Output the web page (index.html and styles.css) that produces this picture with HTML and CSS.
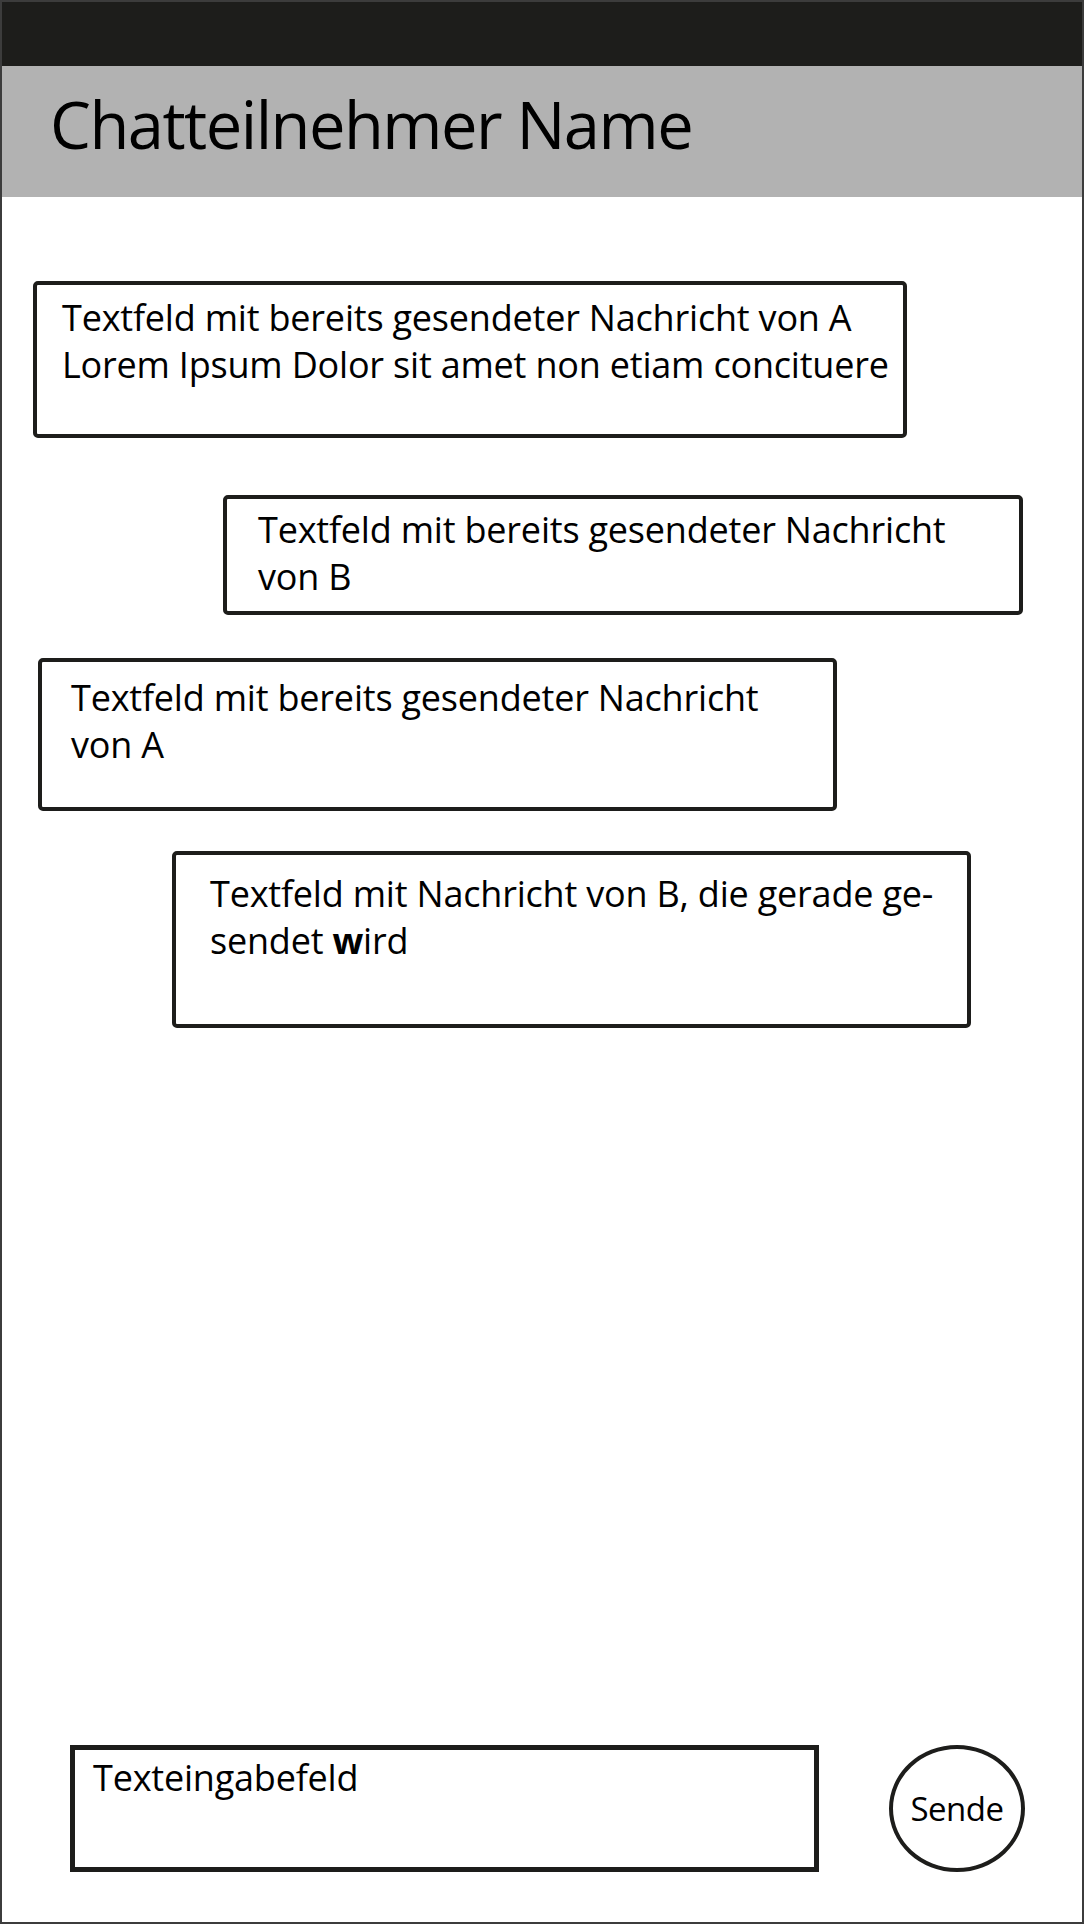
FILE: index.html
```html
<!DOCTYPE html>
<html lang="de">
<head>
  <meta charset="UTF-8">
  <title>Chat Mockup</title>
  <meta name="viewport" content="width=device-width, initial-scale=1">
  <link rel="stylesheet" href="styles.css">
</head>
<body>
  <div class="phone">
    <div class="status-bar"></div>
    <header class="chat-header">
      <h1 class="chat-title">Chatteilnehmer Name</h1>
    </header>

    <main class="chat-area">
      <div class="msg msg-a1">Textfeld mit bereits gesendeter Nachricht von A<br>Lorem Ipsum Dolor sit amet non etiam concituere</div>
      <div class="msg msg-b1">Textfeld mit bereits gesendeter Nachricht<br>von B</div>
      <div class="msg msg-a2">Textfeld mit bereits gesendeter Nachricht<br>von A</div>
      <div class="msg msg-b2">Textfeld mit Nachricht von B, die gerade ge-<br>sendet <b>w</b>ird</div>
    </main>

    <footer class="composer">
      <div class="input-box">Texteingabefeld</div>
      <button class="send-btn">Sende</button>
    </footer>
  </div>
</body>
</html>
```

FILE: styles.css
```css
html, body {
  margin: 0;
  padding: 0;
  background: #fff;
}
body {
  font-family: "Open Sans", "Liberation Sans", sans-serif;
  color: #000;
}
.phone {
  width: 1084px;
  height: 1924px;
  box-sizing: border-box;
  border: 2px solid #3c3c3c;
  display: flex;
  flex-direction: column;
  background: #fff;
}
.status-bar {
  height: 64px;
  background: #1d1d1b;
  flex-shrink: 0;
}
.chat-header {
  box-sizing: border-box;
  height: 131px;
  background: #b2b2b2;
  display: flex;
  align-items: center;
  padding: 0 0 14px 48px;
  flex-shrink: 0;
}
.chat-title {
  margin: 0;
  font-weight: 400;
  font-size: 65px;
  letter-spacing: -1.5px;
  line-height: 1;
}

/* messages */
.chat-area {
  flex: 1;
  display: flex;
  flex-direction: column;
  align-items: flex-start;
  padding-top: 84px;
}
.msg {
  box-sizing: border-box;
  border: 4px solid #1d1d1b;
  border-radius: 5px;
  font-size: 36px;
  line-height: 47px;
  letter-spacing: -0.2px;
  padding-top: 9px;
  white-space: nowrap;
}
.msg-a1 {
  margin-left: 31px;
  width: 874px;
  height: 157px;
  padding-left: 25px;
}
.msg-b1 {
  margin-left: 221px;
  margin-top: 57px;
  width: 800px;
  height: 120px;
  padding-left: 31px;
  padding-top: 7px;
}
.msg-a2 {
  margin-left: 36px;
  margin-top: 43px;
  width: 799px;
  height: 153px;
  padding-left: 29px;
  padding-top: 12px;
}
.msg-b2 {
  margin-left: 170px;
  margin-top: 40px;
  width: 799px;
  height: 177px;
  padding-left: 34px;
  padding-top: 15px;
}

/* input row */
.composer {
  display: flex;
  align-items: center;
  padding: 0 0 50px 68px;
  gap: 70px;
  flex-shrink: 0;
}
.input-box {
  box-sizing: border-box;
  width: 749px;
  height: 127px;
  border: 5px solid #1d1d1b;
  font-size: 36px;
  letter-spacing: -0.2px;
  line-height: 47px;
  padding: 4px 0 0 18px;
}
.send-btn {
  box-sizing: border-box;
  width: 136px;
  height: 127px;
  border: 4px solid #1d1d1b;
  border-radius: 50%;
  background: #fff;
  font-family: inherit;
  font-size: 33px;
  letter-spacing: -0.5px;
  color: #000;
  padding: 0;
}
```
